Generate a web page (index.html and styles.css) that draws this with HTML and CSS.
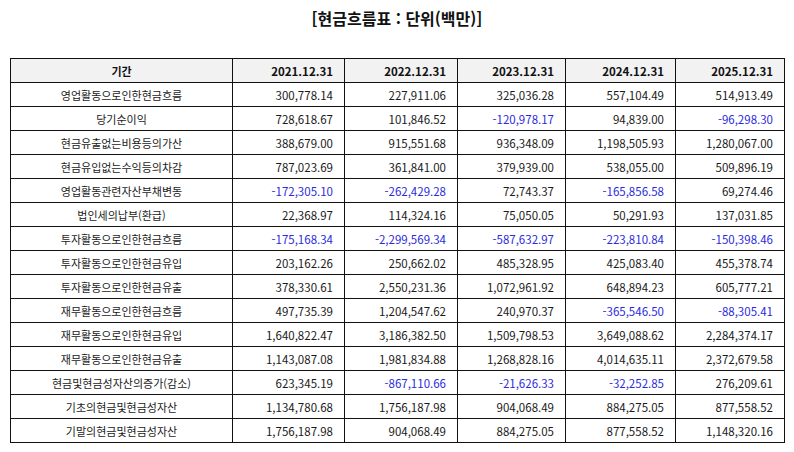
FILE: index.html
```html
<!DOCTYPE html>
<html lang="ko">
<head>
<meta charset="utf-8">
<title>현금흐름표</title>
<link rel="stylesheet" href="styles.css">
</head>
<body>
<h1 class="title">[현금흐름표 : 단위(백만)]</h1>
<table class="cf">
<colgroup>
<col class="c-label"><col class="c-2021"><col class="c-2022"><col class="c-2023"><col class="c-2024"><col class="c-2025">
</colgroup>
<thead>
<tr><th class="lbl">기간</th><th>2021.12.31</th><th>2022.12.31</th><th>2023.12.31</th><th>2024.12.31</th><th>2025.12.31</th></tr>
</thead>
<tbody>
<tr><td class="lbl">영업활동으로인한현금흐름</td><td>300,778.14</td><td>227,911.06</td><td>325,036.28</td><td>557,104.49</td><td>514,913.49</td></tr>
<tr><td class="lbl">당기순이익</td><td>728,618.67</td><td>101,846.52</td><td class="neg">-120,978.17</td><td>94,839.00</td><td class="neg">-96,298.30</td></tr>
<tr><td class="lbl">현금유출없는비용등의가산</td><td>388,679.00</td><td>915,551.68</td><td>936,348.09</td><td>1,198,505.93</td><td>1,280,067.00</td></tr>
<tr><td class="lbl">현금유입없는수익등의차감</td><td>787,023.69</td><td>361,841.00</td><td>379,939.00</td><td>538,055.00</td><td>509,896.19</td></tr>
<tr><td class="lbl">영업활동관련자산부채변동</td><td class="neg">-172,305.10</td><td class="neg">-262,429.28</td><td>72,743.37</td><td class="neg">-165,856.58</td><td>69,274.46</td></tr>
<tr><td class="lbl">법인세의납부(환급)</td><td>22,368.97</td><td>114,324.16</td><td>75,050.05</td><td>50,291.93</td><td>137,031.85</td></tr>
<tr><td class="lbl">투자활동으로인한현금흐름</td><td class="neg">-175,168.34</td><td class="neg">-2,299,569.34</td><td class="neg">-587,632.97</td><td class="neg">-223,810.84</td><td class="neg">-150,398.46</td></tr>
<tr><td class="lbl">투자활동으로인한현금유입</td><td>203,162.26</td><td>250,662.02</td><td>485,328.95</td><td>425,083.40</td><td>455,378.74</td></tr>
<tr><td class="lbl">투자활동으로인한현금유출</td><td>378,330.61</td><td>2,550,231.36</td><td>1,072,961.92</td><td>648,894.23</td><td>605,777.21</td></tr>
<tr><td class="lbl">재무활동으로인한현금흐름</td><td>497,735.39</td><td>1,204,547.62</td><td>240,970.37</td><td class="neg">-365,546.50</td><td class="neg">-88,305.41</td></tr>
<tr><td class="lbl">재무활동으로인한현금유입</td><td>1,640,822.47</td><td>3,186,382.50</td><td>1,509,798.53</td><td>3,649,088.62</td><td>2,284,374.17</td></tr>
<tr><td class="lbl">재무활동으로인한현금유출</td><td>1,143,087.08</td><td>1,981,834.88</td><td>1,268,828.16</td><td>4,014,635.11</td><td>2,372,679.58</td></tr>
<tr><td class="lbl">현금및현금성자산의증가(감소)</td><td>623,345.19</td><td class="neg">-867,110.66</td><td class="neg">-21,626.33</td><td class="neg">-32,252.85</td><td>276,209.61</td></tr>
<tr><td class="lbl">기초의현금및현금성자산</td><td>1,134,780.68</td><td>1,756,187.98</td><td>904,068.49</td><td>884,275.05</td><td>877,558.52</td></tr>
<tr><td class="lbl">기말의현금및현금성자산</td><td>1,756,187.98</td><td>904,068.49</td><td>884,275.05</td><td>877,558.52</td><td>1,148,320.16</td></tr>
</tbody>
</table>
</body>
</html>
```

FILE: styles.css
```css
html, body {
  margin: 0;
  padding: 0;
  background: #ffffff;
}
body {
  font-family: "Noto Sans CJK KR", "Noto Sans", sans-serif;
  color: #1a1a1a;
}
.title {
  margin: 6px 0 0 0;
  height: 24px;
  line-height: 24px;
  font-size: 16px;
  font-weight: 700;
  text-align: center;
  color: #111;
}
.cf {
  margin: 28px 0 0 10px;
  width: 774px;
  table-layout: fixed;
  border-collapse: collapse;
  font-size: 11.5px;
}
.c-label { width: 222px; }
.c-2021 { width: 112px; }
.c-2022 { width: 113px; }
.c-2023 { width: 108px; }
.c-2024 { width: 110px; }
.c-2025 { width: 109px; }
.cf th, .cf td {
  border: 1px solid #111;
  height: 23px;
  padding: 0 11px 0 4px;
  text-align: right;
  white-space: nowrap;
  line-height: 14px;
}
.cf th {
  background: #f2f2f2;
  font-weight: 700;
  color: #111;
}
.cf .lbl {
  text-align: center;
  padding: 0 4px;
  font-size: 11px;
}
.cf th.lbl { font-size: 11px; }
.cf .neg { color: #2b2bdc; }
```
